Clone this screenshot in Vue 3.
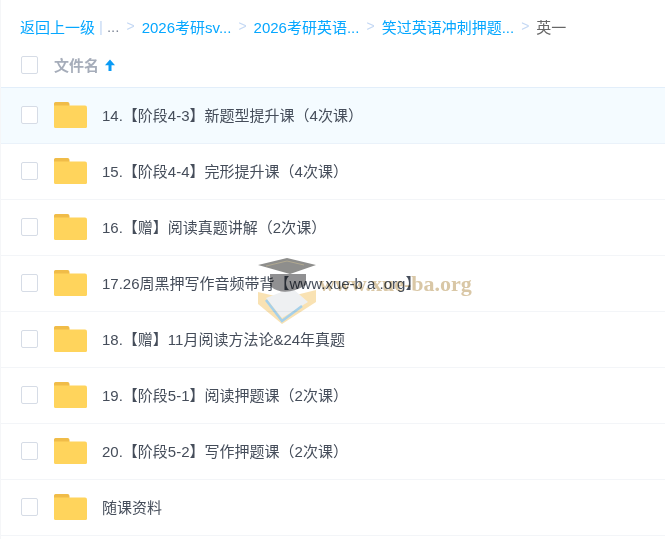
<script setup>
const crumbs = [
  { label: '2026考研sv...', cls: 'c1' },
  { label: '2026考研英语...', cls: 'c2' },
  { label: '笑过英语冲刺押题...', cls: 'c3' },
]

const files = [
  { id: 14, name: '14.【阶段4-3】新题型提升课（4次课）' },
  { id: 15, name: '15.【阶段4-4】完形提升课（4次课）' },
  { id: 16, name: '16.【赠】阅读真题讲解（2次课）' },
  { id: 17, name: '17.26周黑押写作音频带背【www.xue-b a .org】' },
  { id: 18, name: '18.【赠】11月阅读方法论&24年真题' },
  { id: 19, name: '19.【阶段5-1】阅读押题课（2次课）' },
  { id: 20, name: '20.【阶段5-2】写作押题课（2次课）' },
  { id: 21, name: '随课资料' },
]
</script>

<template>
  <div class="page">
    <div class="crumbs">
      <a class="link">返回上一级</a>
      <span class="bar">|</span>
      <span class="dots">...</span>
      <template v-for="c in crumbs" :key="c.cls">
        <span class="sep">&gt;</span>
        <a class="link">{{ c.label }}</a>
      </template>
      <span class="sep">&gt;</span>
      <span class="current">英一</span>
    </div>

    <div class="head">
      <span class="check"></span>
      <span class="head-name">文件名</span>
      <svg class="arrow" width="12" height="14" viewBox="0 0 12 14">
        <path d="M6 1.5 L11 7.2 H7.5 V13 H4.5 V7.2 H1 Z" fill="#0a9bf5" />
      </svg>
    </div>

    <div class="list">
      <div v-for="(f, i) in files" :key="f.id" class="row" :class="{ active: i === 0 }">
        <span class="check"></span>
        <svg class="folder" width="33" height="26" viewBox="0 0 33 26">
          <path d="M1.5 0 H13.5 a2 2 0 0 1 2 2 V6 H0 V1.5 A1.5 1.5 0 0 1 1.5 0 Z" fill="#f0bc48" />
          <path d="M0 3.5 H31 a2 2 0 0 1 2 2 V24.5 a1.5 1.5 0 0 1 -1.5 1.5 H1.5 a1.5 1.5 0 0 1 -1.5 -1.5 Z" fill="#ffd45c" />
        </svg>
        <span class="name">{{ f.name }}</span>
      </div>
    </div>

    <div class="mark">
      <svg width="62" height="68" viewBox="0 0 62 68">
        <path d="M0 34 L26 40 L58 32 L58 44 L24 66 L0 46 Z" fill="#f8dda6" opacity="0.85" />
        <path d="M8 40 L24 60 L50 44 L34 30 Z" fill="#eef0f2" />
        <path d="M8 42 L24 63 L44 48" fill="none" stroke="#a5d0ea" stroke-width="2.5" />
        <path d="M12 16 V28 Q26 40 48 27 V16 Z" fill="#77777a" opacity="0.82" />
        <path d="M0 7 L29 0 L58 7 L32 16 Z" fill="#8e8e8c" />
        <path d="M8 8 L29 3 L46 7" fill="none" stroke="#b0a890" stroke-width="1" />
      </svg>
      <span class="mark-text">www.xue-ba.org</span>
    </div>
  </div>
</template>

<style scoped>
.page {
  position: relative;
  width: 665px;
  height: 539px;
  overflow: hidden;
  box-sizing: border-box;
  border-left: 1px solid #f5f6f8;
  font-family: "Liberation Sans", "Noto Sans CJK SC", sans-serif;
  font-size: 15px;
  color: #454d5a;
  background: #fff;
}
.crumbs {
  display: flex;
  align-items: center;
  height: 20px;
  padding: 16px 0 0 19px;
  white-space: nowrap;
}
.link {
  color: #06a7ff;
}
.bar {
  margin-left: 4px;
  color: #c4d8f4;
}
.dots {
  margin-left: 4px;
  color: #818999;
}
.sep {
  margin: 0 7px;
  font-size: 14px;
  color: #c4d8f4;
}
.current {
  color: #666;
}
.head {
  display: flex;
  align-items: center;
  height: 52px;
  box-sizing: border-box;
  padding: 6px 0 0 20px;
  border-bottom: 1px solid #e2eefa;
}
.head-name {
  margin-left: 16px;
  font-weight: 700;
  color: #a6adba;
}
.arrow {
  margin-left: 5px;
}
.check {
  flex: none;
  width: 15px;
  height: 16px;
  border: 1px solid #d6dce6;
  border-radius: 2px;
  background: #fff;
}
.row {
  display: flex;
  align-items: center;
  height: 56px;
  box-sizing: border-box;
  padding: 0 0 2px 20px;
  border-bottom: 1px solid #f3f5f8;
}
.row.active {
  background: #f4fbff;
  border-bottom-color: #eaf2fa;
}
.folder {
  flex: none;
  margin-left: 16px;
}
.name {
  margin-left: 15px;
  white-space: nowrap;
}
.mark {
  position: absolute;
  left: 257px;
  top: 258px;
  display: flex;
  align-items: flex-start;
  pointer-events: none;
  mix-blend-mode: multiply;
}
.mark svg {
  flex: none;
}
.mark-text {
  margin: 13px 0 0 -1px;
  font-family: "Liberation Serif", serif;
  font-size: 22px;
  font-weight: 700;
  color: #d9c7a6;
}
</style>
